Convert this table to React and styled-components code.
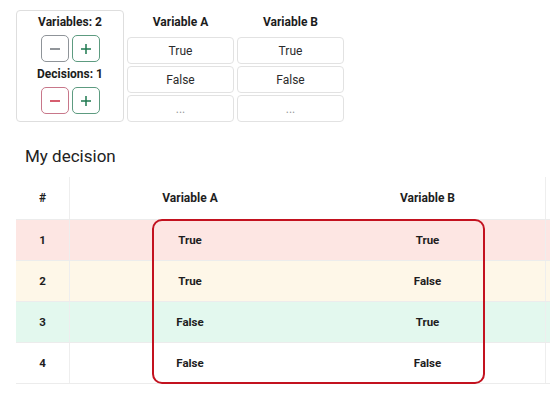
import React from "react";
import styled, { createGlobalStyle } from "styled-components";

const GlobalStyle = createGlobalStyle`
  html, body {
    margin: 0;
    padding: 0;
    background: #ffffff;
    overflow: hidden;
    font-family: Roboto, "Liberation Sans", Arial, sans-serif;
    color: #212529;
  }
`;

const Page = styled.div`
  width: 550px;
  height: 398px;
  overflow: hidden;
`;

const Setup = styled.div`
  display: flex;
  align-items: stretch;
  gap: 3px;
  padding: 10px 0 0 16px;
`;

const Card = styled.div`
  width: 108px;
  box-sizing: border-box;
  border: 1px solid #dedede;
  border-radius: 4px;
  padding: 4px 0 0;
  display: flex;
  flex-direction: column;
  align-items: center;
`;

const CardLabel = styled.div`
  font-size: 12px;
  font-weight: 700;
  line-height: 15px;
  color: #1c1c1c;
  margin-top: ${(p) => p.$gap || 0}px;
`;

const ButtonRow = styled.div`
  display: flex;
  gap: 3px;
  margin-top: 5px;
`;

const tones = {
  neutral: { border: "#8f9499", ink: "#6c7278" },
  add: { border: "#5d9b80", ink: "#1f7a50" },
  remove: { border: "#c8778a", ink: "#c8283f" },
};

const StepButton = styled.button`
  width: 28px;
  height: 27px;
  box-sizing: border-box;
  padding: 0;
  background: #ffffff;
  border: 1px solid ${(p) => tones[p.$tone].border};
  border-radius: 5px;
  color: ${(p) => tones[p.$tone].ink};
  display: flex;
  align-items: center;
  justify-content: center;
  cursor: pointer;
`;

const Column = styled.div`
  width: 107px;
  display: flex;
  flex-direction: column;
  padding-top: 5px;
`;

const ColumnHead = styled.div`
  font-size: 12px;
  font-weight: 700;
  line-height: 15px;
  text-align: center;
  color: #1c1c1c;
  margin-bottom: 7px;
`;

const ValueList = styled.div`
  display: flex;
  flex-direction: column;
  gap: 2px;
`;

const ValueCell = styled.div`
  height: 27px;
  box-sizing: border-box;
  border: 1px solid #e2e2e2;
  border-radius: 4px;
  display: flex;
  align-items: center;
  justify-content: center;
  font-size: 12px;
  color: ${(p) => (p.$muted ? "#9a9a9a" : "#2b2b2b")};
`;

const Heading = styled.h2`
  margin: 24px 0 0 25px;
  font-size: 17px;
  font-weight: 400;
  line-height: 20px;
  color: #222;
`;

const Table = styled.div`
  margin: 11px 0 0 16px;
  width: 640px;
`;

const GRID = "54px 240px 236px 1fr";

const HeadRow = styled.div`
  display: grid;
  grid-template-columns: ${GRID};
  height: 42px;
  border-bottom: 1px solid #ececec;
`;

const Body = styled.div`
  position: relative;
`;

const rowTints = ["#fde6e3", "#fef7e8", "#e3f8ee", "#ffffff"];

const Row = styled.div`
  display: grid;
  grid-template-columns: ${GRID};
  height: 40px;
  background: ${(p) => rowTints[p.$index]};
  border-bottom: 1px solid #ececec;
`;

const Cell = styled.div`
  display: flex;
  align-items: center;
  justify-content: center;
  font-size: ${(p) => (p.$head ? 12 : 11.5)}px;
  font-weight: 700;
  color: #1e1e1e;
  border-right: ${(p) => (p.$divider ? "1px solid #eeeeee" : "none")};
`;

const Highlight = styled.div`
  position: absolute;
  top: -1px;
  bottom: 0;
  left: 136px;
  width: 333px;
  box-sizing: border-box;
  border: 2px solid #c3121f;
  border-radius: 10px;
  pointer-events: none;
`;

const Minus = () => (
  <svg width="12" height="12" viewBox="0 0 12 12">
    <path d="M1 6h10" stroke="currentColor" strokeWidth="1.5" />
  </svg>
);

const Plus = () => (
  <svg width="12" height="12" viewBox="0 0 12 12">
    <path d="M1 6h10M6 1v10" stroke="currentColor" strokeWidth="1.5" />
  </svg>
);

const variables = [
  { name: "Variable A", values: ["True", "False"] },
  { name: "Variable B", values: ["True", "False"] },
];

const decisions = [
  ["1", "True", "True"],
  ["2", "True", "False"],
  ["3", "False", "True"],
  ["4", "False", "False"],
];

export default function App() {
  return (
    <Page>
      <GlobalStyle />
      <Setup>
        <Card>
          <CardLabel>Variables: 2</CardLabel>
          <ButtonRow>
            <StepButton $tone="neutral" aria-label="Remove variable">
              <Minus />
            </StepButton>
            <StepButton $tone="add" aria-label="Add variable">
              <Plus />
            </StepButton>
          </ButtonRow>
          <CardLabel $gap={5}>Decisions: 1</CardLabel>
          <ButtonRow>
            <StepButton $tone="remove" aria-label="Remove decision">
              <Minus />
            </StepButton>
            <StepButton $tone="add" aria-label="Add decision">
              <Plus />
            </StepButton>
          </ButtonRow>
        </Card>
        {variables.map((v) => (
          <Column key={v.name}>
            <ColumnHead>{v.name}</ColumnHead>
            <ValueList>
              {v.values.map((val) => (
                <ValueCell key={val}>{val}</ValueCell>
              ))}
              <ValueCell $muted>...</ValueCell>
            </ValueList>
          </Column>
        ))}
      </Setup>

      <Heading>My decision</Heading>

      <Table>
        <HeadRow>
          <Cell $head $divider>#</Cell>
          <Cell $head>Variable A</Cell>
          <Cell $head $divider>Variable B</Cell>
          <Cell $head />
        </HeadRow>
        <Body>
          {decisions.map(([n, a, b], i) => (
            <Row key={n} $index={i}>
              <Cell $divider>{n}</Cell>
              <Cell>{a}</Cell>
              <Cell $divider>{b}</Cell>
              <Cell />
            </Row>
          ))}
          <Highlight />
        </Body>
      </Table>
    </Page>
  );
}
